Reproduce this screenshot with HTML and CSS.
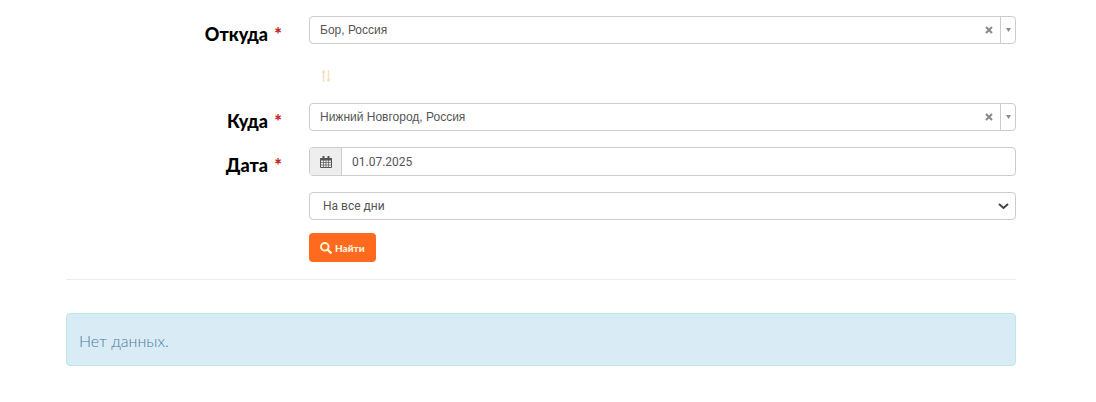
FILE: index.html
```html
<!DOCTYPE html>
<html lang="ru">
  <head>
    <meta charset="UTF-8" />
    <meta name="viewport" content="width=device-width, initial-scale=1.0" />
    <title>Поиск рейсов</title>
    <link rel="stylesheet" href="styles.css">
  </head>
  <body>
    <main class="container">
      <form class="search-form">
        <div class="row">
          <label for="from">Откуда <span class="required">*</span></label>
          <div class="control combo">
            <select id="from">
              <option>Бор, Россия</option>
            </select>
            <button type="button" class="clear" aria-label="Очистить">
              <svg width="8" height="8" viewBox="0 0 8 8"><path d="M1 1l6 6M7 1l-6 6" stroke="#888" stroke-width="2" /></svg>
            </button>
            <button type="button" class="arrow" aria-label="Открыть список">
              <svg width="5" height="4" viewBox="0 0 6 5"><path d="M0 0h6L3 5z" fill="#888" /></svg>
            </button>
          </div>
        </div>

        <div class="row swap-row">
          <button type="button" class="swap" aria-label="Поменять местами">
            <svg width="10" height="12" viewBox="0 0 10 12" fill="none" stroke="#fbdcc0">
              <path d="M2.500 12V1M1 2.500L2.500 1 4 2.500M7.500 0v11M6 9.500L7.500 11 9 9.500" stroke-width="1.500" />
            </svg>
          </button>
        </div>

        <div class="row">
          <label for="to">Куда <span class="required">*</span></label>
          <div class="control combo">
            <select id="to">
              <option>Нижний Новгород, Россия</option>
            </select>
            <button type="button" class="clear" aria-label="Очистить">
              <svg width="8" height="8" viewBox="0 0 8 8"><path d="M1 1l6 6M7 1l-6 6" stroke="#888" stroke-width="2" /></svg>
            </button>
            <button type="button" class="arrow" aria-label="Открыть список">
              <svg width="5" height="4" viewBox="0 0 6 5"><path d="M0 0h6L3 5z" fill="#888" /></svg>
            </button>
          </div>
        </div>

        <div class="row">
          <label for="date">Дата <span class="required">*</span></label>
          <div class="control date">
            <span class="addon">
              <svg width="12" height="12" viewBox="0 0 12 12" fill="none" stroke="#555">
                <path d="M.5 2.500h11v9H.5z" />
                <path d="M.5 3.500h11" stroke-width="2" />
                <path d="M3.500 0v3M8.500 0v3" stroke-width="2" />
                <path d="M3.500 4v7M6 4v7M8.500 4v7M1 6.500h10M1 9h10" stroke-width=".7" />
              </svg>
            </span>
            <input type="text" id="date" value="01.07.2025" />
          </div>
        </div>

        <div class="row">
          <div class="control days">
            <select id="days" aria-label="Дни">
              <option>На все дни</option>
            </select>
            <svg class="chevron" width="11" height="7" viewBox="0 0 11 7"><path d="M1 1l4.500 4L10 1" fill="none" stroke="#444" stroke-width="2" /></svg>
          </div>
        </div>

        <div class="row">
          <button type="submit" class="btn">
            <svg width="12" height="12" viewBox="0 0 12 12" fill="none" stroke="#fff3d0" stroke-width="2">
              <circle cx="4.800" cy="4.800" r="3.800" />
              <path d="M7.500 7.500l4 4" stroke-width="2.400" />
            </svg>
            Найти
          </button>
        </div>
      </form>

      <hr>

      <div class="alert">Нет данных.</div>
    </main>
  </body>
</html>
```

FILE: styles.css
```css
* {
    box-sizing: border-box;
}
body {
    font-family: Roboto, "Liberation Sans", sans-serif;
    font-size: 12px;
    color: #555;
    background-color: #fff;
    margin: 0;
}
.container {
    padding: 16px 80px 36px 66px;
}
.search-form {
    display: flex;
    flex-direction: column;
    gap: 16px;
}
.row {
    display: grid;
    grid-template-columns: 216px 1fr;
    column-gap: 27px;
}
.row > :only-child {
    grid-column: 2;
}
label {
    font-family: Lato, "Open Sans", sans-serif;
    font-size: 18px;
    font-weight: 900;
    line-height: 20px;
    padding-top: 8px;
    text-align: right;
    color: #000;
}
.required {
    color: #c1272d;
    margin-left: 2px;
}
.control {
    display: flex;
    height: 28px;
    border: 1px solid #ccc;
    border-radius: 4px;
    overflow: hidden;
}
.combo {
    font-family: "Liberation Sans", Arial, sans-serif;
}
select,
input {
    flex: 1;
    min-width: 0;
    appearance: none;
    border: 0;
    margin: 0;
    padding: 0 10px;
    background: none;
    font: inherit;
    color: inherit;
}
button {
    display: flex;
    align-items: center;
    justify-content: center;
    border: 0;
    padding: 0;
    background: none;
    cursor: pointer;
}
.clear {
    width: 22px;
}
.arrow {
    width: 15px;
    border-left: 1px solid #ccc;
}
.swap-row {
    padding: 10px 0 5px 12px;
}
.swap {
    justify-self: start;
}
.date {
    height: 29px;
}
.addon {
    display: flex;
    align-items: center;
    justify-content: center;
    width: 32px;
    background-color: #eee;
    border-right: 1px solid #ccc;
}
.days {
    align-items: center;
    padding-right: 6px;
}
.days select {
    align-self: stretch;
    padding: 0 13px;
}
.btn {
    justify-self: start;
    gap: 3px;
    height: 29px;
    margin-top: -3px;
    padding: 0 11px;
    border-radius: 4px;
    background-color: #ff6a1f;
    color: #fff3e0;
    font-family: Lato, "Open Sans", sans-serif;
    font-size: 10px;
    font-weight: 900;
}
hr {
    border: 0;
    border-top: 1px solid #eee;
    margin: 17px 0 33px;
}
.alert {
    padding: 14px 12px 12px;
    border: 1px solid #bce8e6;
    border-radius: 4px;
    background-color: #d9ecf6;
    color: #4f7b98;
    font-family: Lato, "Open Sans", sans-serif;
    font-size: 16px;
    font-weight: 300;
    line-height: 25px;
}
```
